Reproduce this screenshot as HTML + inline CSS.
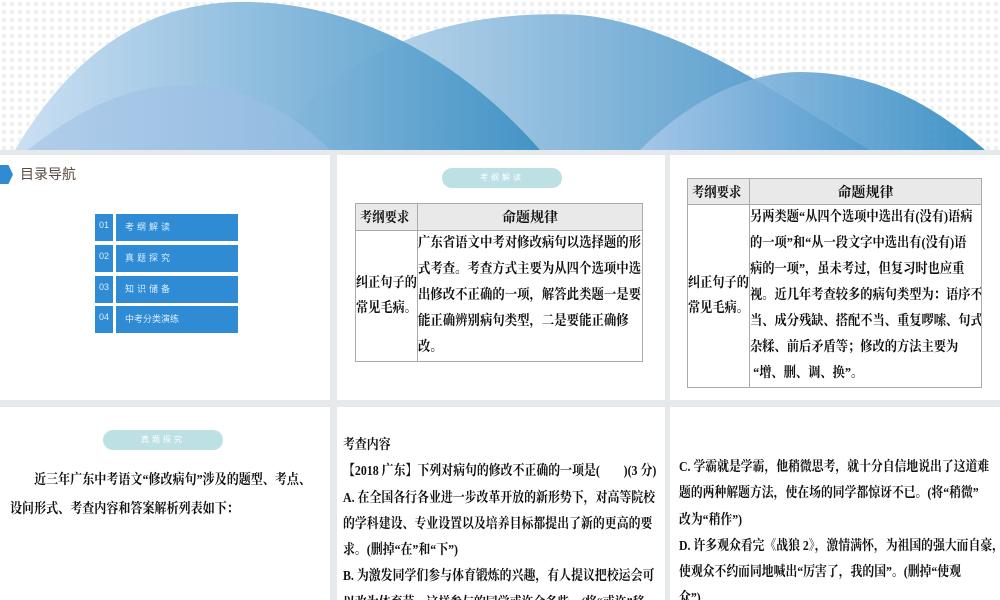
<!DOCTYPE html>
<html><head><meta charset="utf-8"><style>
*{margin:0;padding:0;box-sizing:border-box}
html,body{width:1000px;height:600px;overflow:hidden}
body{background:#e6e9ec;position:relative;font-family:"Liberation Serif","Noto Serif CJK SC",serif}
.hdr{position:absolute;left:0;top:0;width:1000px;height:150px;background:#fff radial-gradient(circle,#efefef 2px,transparent 2.5px) 0 0/8px 8px}
.p{position:absolute;background:#fff;overflow:hidden}
.pill{position:absolute;background:#bde0e5;border-radius:11px;color:#fff;font:8px "Liberation Sans","Noto Sans CJK SC",sans-serif;letter-spacing:3px;text-align:center;line-height:20px;height:20px;width:120px}
table{position:absolute;border-collapse:collapse;font-size:14px;font-weight:bold;color:#111;white-space:nowrap;table-layout:fixed}
td{border:1px solid #aaa;vertical-align:middle;overflow:hidden}
th{border:1px solid #aaa;background:#e9e9e9;font-weight:bold;font-size:14px}
.s{display:block;transform-origin:left center}
.t{position:absolute;font-size:14px;font-weight:bold;color:#111;line-height:26.3px;white-space:nowrap;transform-origin:left top}
.nb{position:absolute;background:#2e8bd4;color:#dceeff;font:9px "Liberation Sans","Noto Sans CJK SC",sans-serif;padding:6px 0 0 4px;height:27px}
</style></head><body>
<div class="hdr">
<svg width="1000" height="150" style="position:absolute;left:0;top:0">
<defs>
<linearGradient id="g1" x1="0" x2="1"><stop offset="0" stop-color="#c9def2"/><stop offset="1" stop-color="#3f91c4"/></linearGradient>
<linearGradient id="g2" x1="0" x2="1"><stop offset="0" stop-color="#cfe1f2"/><stop offset="1" stop-color="#3b8dc3"/></linearGradient>
<linearGradient id="g3" x1="0" x2="1"><stop offset="0" stop-color="#a9c8ea"/><stop offset="1" stop-color="#2a87c0"/></linearGradient>
</defs>
<path d="M270 150 C 350 30 480 10 580 15 C 690 25 800 110 870 150 Z" fill="url(#g2)" opacity="0.95"/>
<path d="M640 150 C 700 90 760 72 800 72 C 890 72 950 120 985 150 Z" fill="url(#g3)" opacity="0.9"/>
<path d="M15 150 C 80 40 160 0 250 2 C 370 5 470 70 540 150 Z" fill="url(#g1)" opacity="0.95"/>
<path d="M28 150 C 90 100 140 85 185 85 C 240 85 290 110 330 150 Z" fill="#9fc0e6" opacity="0.55"/>
</svg>
</div>

<div class="p" style="left:0;top:155px;width:330px;height:245px">
<div style="position:absolute;left:0;top:10px;width:13px;height:19px;background:#2e8bd4;clip-path:polygon(0 0,65% 0,100% 50%,65% 100%,0 100%)"></div>
<div style="position:absolute;left:20px;top:9px;font:14px 'Liberation Sans','Noto Sans CJK SC',sans-serif;color:#5a4a42">目录导航</div>
<div class="nb" style="left:95px;top:59px;width:18px">01</div><div class="nb" style="left:116px;top:59px;width:122px;padding-left:9px;letter-spacing:3px">考纲解读</div>
<div class="nb" style="left:95px;top:90px;width:18px">02</div><div class="nb" style="left:116px;top:90px;width:122px;padding-left:9px;letter-spacing:3px">真题探究</div>
<div class="nb" style="left:95px;top:121px;width:18px">03</div><div class="nb" style="left:116px;top:121px;width:122px;padding-left:9px;letter-spacing:3px">知识储备</div>
<div class="nb" style="left:95px;top:151px;width:18px">04</div><div class="nb" style="left:116px;top:151px;width:122px;padding-left:9px">中考分类演练</div>
</div>

<div class="p" style="left:337px;top:155px;width:328px;height:245px">
<div class="pill" style="left:105px;top:13px">考纲解读</div>
<table style="left:18px;top:48px;width:288px">
<tr style="height:27px"><th style="width:62px"><span class="s" style="transform:scaleX(0.88);padding-left:4px">考纲要求</span></th><th>命题规律</th></tr>
<tr><td style="line-height:25px"><span class="s" style="transform:scaleX(0.87)">纠正句子的<br>常见毛病。</span></td><td style="line-height:26px;height:130px"><span class="s" style="transform:scaleX(0.885)">广东省语文中考对修改病句以选择题的形<br>式考查。考查方式主要为从四个选项中选<br>出修改不正确的一项，解答此类题一是要<br>能正确辨别病句类型，二是要能正确修<br>改。</span></td></tr>
</table>
</div>

<div class="p" style="left:670px;top:155px;width:330px;height:245px">
<table style="left:17px;top:23px;width:295px">
<tr style="height:26px"><th style="width:62px"><span class="s" style="transform:scaleX(0.88);padding-left:4px">考纲要求</span></th><th>命题规律</th></tr>
<tr><td style="line-height:25px"><span class="s" style="transform:scaleX(0.87)">纠正句子的<br>常见毛病。</span></td><td style="line-height:26px;height:179px"><span class="s" style="transform:scaleX(0.875)">另两类题“从四个选项中选出有(没有)语病<br>的一项”和“从一段文字中选出有(没有)语<br>病的一项”，虽未考过，但复习时也应重<br>视。近几年考查较多的病句类型为：语序不<br>当、成分残缺、搭配不当、重复啰嗦、句式<br>杂糅、前后矛盾等；修改的方法主要为<br>&nbsp;“增、删、调、换”。</span></td></tr>
</table>
</div>

<div class="p" style="left:0;top:407px;width:330px;height:193px">
<div class="pill" style="left:103px;top:23px">真题探究</div>
<div class="t" style="left:10px;top:59px;line-height:29px;transform:scaleX(0.86)">　　近三年广东中考语文“修改病句”涉及的题型、考点、<br>设问形式、考查内容和答案解析列表如下：</div>
</div>

<div class="p" style="left:337px;top:407px;width:328px;height:193px">
<div class="t" style="left:6px;top:26px;transform:scaleX(0.85)">考查内容<br>【2018 广东】下列对病句的修改不正确的一项是(　　)(3 分)<br>A. 在全国各行各业进一步改革开放的新形势下，对高等院校<br>的学科建设、专业设置以及培养目标都提出了新的更高的要<br>求。(删掉“在”和“下”)<br>B. 为激发同学们参与体育锻炼的兴趣，有人提议把校运会可<br>以改为体育节，这样参与的同学或许会多些。(将“或许”移</div>
</div>

<div class="p" style="left:670px;top:407px;width:330px;height:193px">
<div class="t" style="left:9px;top:48px;transform:scaleX(0.845)">C. 学霸就是学霸，他稍微思考，就十分自信地说出了这道难<br>题的两种解题方法，使在场的同学都惊讶不已。(将“稍微”<br>改为“稍作”)<br>D. 许多观众看完《战狼 2》，激情满怀，为祖国的强大而自豪，<br>使观众不约而同地喊出“厉害了，我的国”。(删掉“使观<br>众”)</div>
</div>
</body></html>
